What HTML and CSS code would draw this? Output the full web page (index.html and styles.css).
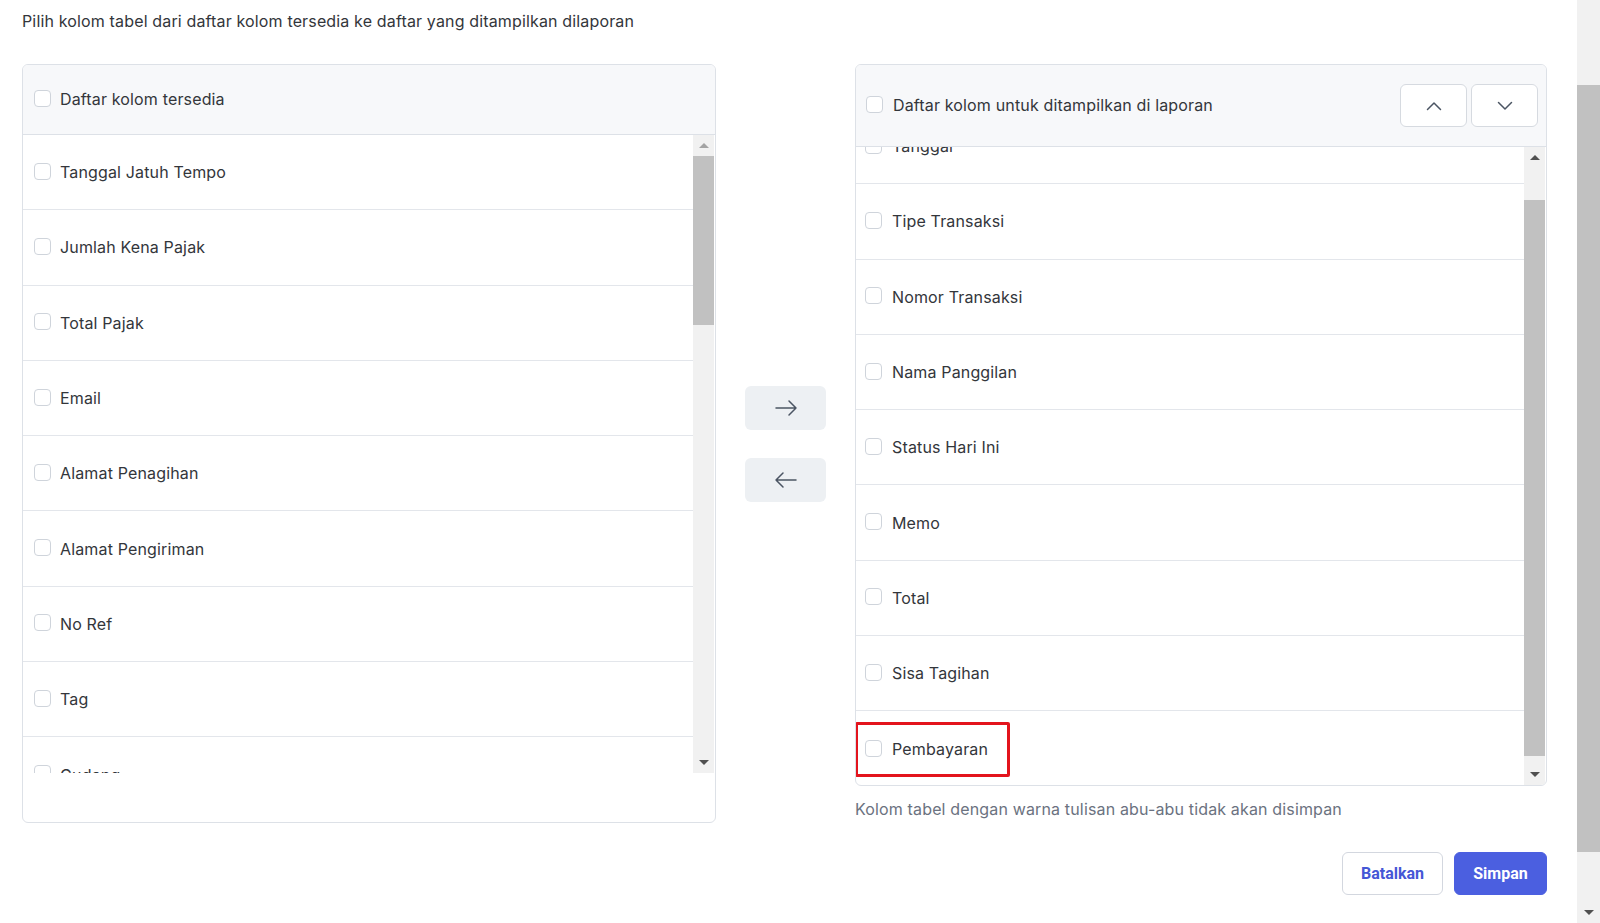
FILE: index.html
```html
<!DOCTYPE html>
<html lang="id">
<head>
    <meta charset="UTF-8">
    <meta name="viewport" content="width=device-width, initial-scale=1.0">
    <title>Atur Kolom Laporan</title>
    <link rel="stylesheet" href="styles.css">
</head>
<body>
    <div class="page">
        <div class="content">
            <p class="intro">Pilih kolom tabel dari daftar kolom tersedia ke daftar yang ditampilkan dilaporan</p>

            <div class="transfer">
                <div class="panel panel-left">
                    <div class="panel-header">
                        <label class="item"><span class="check"></span>Daftar kolom tersedia</label>
                    </div>
                    <div class="list-wrap">
                        <div class="list">
                            <div class="row"><label class="item"><span class="check"></span>Tanggal Jatuh Tempo</label></div>
                            <div class="row"><label class="item"><span class="check"></span>Jumlah Kena Pajak</label></div>
                            <div class="row"><label class="item"><span class="check"></span>Total Pajak</label></div>
                            <div class="row"><label class="item"><span class="check"></span>Email</label></div>
                            <div class="row"><label class="item"><span class="check"></span>Alamat Penagihan</label></div>
                            <div class="row"><label class="item"><span class="check"></span>Alamat Pengiriman</label></div>
                            <div class="row"><label class="item"><span class="check"></span>No Ref</label></div>
                            <div class="row"><label class="item"><span class="check"></span>Tag</label></div>
                            <div class="row"><label class="item"><span class="check"></span>Gudang</label></div>
                        </div>
                        <div class="scrollbar">
                            <span class="arrow-up disabled"></span>
                            <div class="track"><div class="thumb thumb-left"></div></div>
                            <span class="arrow-down"></span>
                        </div>
                    </div>
                </div>

                <div class="move-buttons">
                    <button class="move-btn" title="Tambahkan">
                        <svg width="24" height="24" viewBox="0 0 24 24" fill="none" stroke="#4b5563" stroke-width="1.5" stroke-linecap="round" stroke-linejoin="round"><path d="M2 12h20M15 5l7 7-7 7"/></svg>
                    </button>
                    <button class="move-btn" title="Hapus">
                        <svg width="24" height="24" viewBox="0 0 24 24" fill="none" stroke="#4b5563" stroke-width="1.5" stroke-linecap="round" stroke-linejoin="round"><path d="M22 12H2M9 5l-7 7 7 7"/></svg>
                    </button>
                </div>

                <div class="right-col">
                    <div class="panel panel-right">
                        <div class="panel-header">
                            <label class="item"><span class="check"></span>Daftar kolom untuk ditampilkan di laporan</label>
                            <div class="order-buttons">
                                <button class="order-btn" title="Naik">
                                    <svg width="16" height="10" viewBox="0 0 16 10" fill="none" stroke="#4b5563" stroke-width="1.5" stroke-linecap="round" stroke-linejoin="round"><path d="M1.5 8.5L8 2l6.5 6.5"/></svg>
                                </button>
                                <button class="order-btn" title="Turun">
                                    <svg width="16" height="10" viewBox="0 0 16 10" fill="none" stroke="#4b5563" stroke-width="1.5" stroke-linecap="round" stroke-linejoin="round"><path d="M1.5 1.5L8 8l6.5-6.5"/></svg>
                                </button>
                            </div>
                        </div>
                        <div class="list-wrap">
                            <div class="list list-scrolled">
                                <div class="row"><label class="item"><span class="check"></span>Tanggal</label></div>
                                <div class="row"><label class="item"><span class="check"></span>Tipe Transaksi</label></div>
                                <div class="row"><label class="item"><span class="check"></span>Nomor Transaksi</label></div>
                                <div class="row"><label class="item"><span class="check"></span>Nama Panggilan</label></div>
                                <div class="row"><label class="item"><span class="check"></span>Status Hari Ini</label></div>
                                <div class="row"><label class="item"><span class="check"></span>Memo</label></div>
                                <div class="row"><label class="item"><span class="check"></span>Total</label></div>
                                <div class="row"><label class="item"><span class="check"></span>Sisa Tagihan</label></div>
                                <div class="row row-last">
                                    <label class="item"><span class="check"></span>Pembayaran</label>
                                    <div class="highlight"></div>
                                </div>
                            </div>
                            <div class="scrollbar">
                                <span class="arrow-up"></span>
                                <div class="track"><div class="thumb thumb-right"></div></div>
                                <span class="arrow-down"></span>
                            </div>
                        </div>
                    </div>

                    <p class="note">Kolom tabel dengan warna tulisan abu-abu tidak akan disimpan</p>

                    <div class="actions">
                        <button class="btn btn-cancel">Batalkan</button>
                        <button class="btn btn-save">Simpan</button>
                    </div>
                </div>
            </div>
        </div>

        <div class="page-scrollbar">
            <div class="track"><div class="thumb thumb-page"></div></div>
            <span class="arrow-down"></span>
        </div>
    </div>
</body>
</html>
```

FILE: styles.css
```css
:root {
    --text-color: #33363b;
    --muted-color: #6b7280;
    --border-color: #dde1e7;
    --divider-color: #e3e6eb;
    --header-bg: #f7f8fa;
    --primary-color: #4b5fe0;
    --scroll-track: #f1f1f1;
    --scroll-thumb: #c1c1c1;
}

* {
    box-sizing: border-box;
    margin: 0;
    padding: 0;
}

body {
    font-family: Inter, 'Noto Sans', sans-serif;
    font-size: 16px;
    letter-spacing: 0.15px;
    color: var(--text-color);
    background-color: #fff;
    overflow: hidden;
}

button {
    font-family: inherit;
    cursor: pointer;
}

.page {
    display: flex;
    height: 923px;
}

.content {
    flex: 1;
    padding: 9px 0 0 22px;
}

.intro {
    line-height: 24px;
    margin-bottom: 31px;
}

.transfer {
    display: flex;
    align-items: flex-start;
}

/* panels */
.panel {
    border: 1px solid var(--border-color);
    border-radius: 6px;
    background-color: #fff;
    overflow: hidden;
}

.panel-left {
    width: 694px;
    height: 759px;
}

.panel-right {
    width: 692px;
    height: 722px;
    display: flex;
    flex-direction: column;
}

.panel-header {
    display: flex;
    align-items: center;
    justify-content: space-between;
    background-color: var(--header-bg);
    border-bottom: 1px solid var(--border-color);
}

.panel-left .panel-header {
    height: 70px;
    padding-left: 11px;
}

.panel-right .panel-header {
    height: 82px;
    padding: 0 8px 0 10px;
}

.item {
    display: flex;
    align-items: center;
    gap: 9px;
    line-height: 20px;
}

.panel-header .item {
    margin-top: -1px;
}

.panel-right .item {
    gap: 10px;
}

.check {
    width: 17px;
    height: 17px;
    margin-top: -2px;
    border: 1px solid #cfd4db;
    border-radius: 4px;
    background-color: #fff;
    flex-shrink: 0;
}

.order-buttons {
    display: flex;
    gap: 4px;
}

.order-btn {
    width: 67px;
    height: 43px;
    border: 1px solid #d6dae0;
    border-radius: 6px;
    background-color: #fff;
    display: flex;
    align-items: center;
    justify-content: center;
}

/* lists */
.list-wrap {
    display: flex;
    overflow: hidden;
}

.panel-left .list-wrap {
    height: 638px;
}

.panel-right .list-wrap {
    flex: 1;
}

.list {
    flex: 1;
}

.list-scrolled {
    margin-top: -38px;
}

.row {
    height: 75.3px;
    display: flex;
    align-items: center;
    border-bottom: 1px solid var(--divider-color);
}

.panel-left .row {
    padding-left: 11px;
}

.panel-right .row {
    padding-left: 9px;
}

.row-last {
    position: relative;
    border-bottom: none;
}

.highlight {
    position: absolute;
    left: -1px;
    top: 11px;
    width: 155px;
    height: 55px;
    border: 3px solid #e3141d;
    border-radius: 2px;
}

/* fake scrollbars */
.scrollbar {
    width: 21px;
    margin-right: 1px;
    background-color: var(--scroll-track);
    display: flex;
    flex-direction: column;
    align-items: center;
}

.scrollbar .track {
    flex: 1;
    width: 100%;
}

.thumb {
    width: 100%;
    background-color: var(--scroll-thumb);
}

.thumb-left {
    height: 169px;
}

.thumb-right {
    height: 556px;
    margin-top: 32px;
}

.arrow-up,
.arrow-down {
    width: 0;
    height: 0;
    border-left: 5px solid transparent;
    border-right: 5px solid transparent;
    margin: 8px 0;
    flex-shrink: 0;
}

.arrow-up {
    border-bottom: 5px solid #505050;
}

.arrow-up.disabled {
    border-bottom-color: #a3a3a3;
}

.arrow-down {
    border-top: 5px solid #505050;
}

/* move buttons */
.move-buttons {
    width: 139px;
    height: 759px;
    display: flex;
    flex-direction: column;
    align-items: center;
    justify-content: center;
    gap: 28px;
}

.move-btn {
    width: 81px;
    height: 44px;
    border: none;
    border-radius: 6px;
    background-color: #edf0f3;
    display: flex;
    align-items: center;
    justify-content: center;
}

/* right column */
.right-col {
    width: 692px;
}

.note {
    color: var(--muted-color);
    line-height: 24px;
    margin-top: 11px;
}

.actions {
    display: flex;
    justify-content: flex-end;
    gap: 11px;
    margin-top: 31px;
}

.btn {
    height: 43px;
    border-radius: 6px;
    font-family: Roboto, sans-serif;
    font-size: 16px;
    font-weight: 700;
    letter-spacing: 0;
}

.btn-cancel {
    width: 101px;
    background-color: #fff;
    border: 1px solid #d3d7df;
    color: #4557d6;
}

.btn-save {
    width: 93px;
    background-color: var(--primary-color);
    border: 1px solid var(--primary-color);
    color: #fff;
}

/* page scrollbar */
.page-scrollbar {
    width: 23px;
    margin-left: 30px;
    background-color: var(--scroll-track);
    display: flex;
    flex-direction: column;
    align-items: center;
}

.page-scrollbar .track {
    flex: 1;
    width: 100%;
}

.thumb-page {
    height: 767px;
    margin-top: 85px;
}
```
